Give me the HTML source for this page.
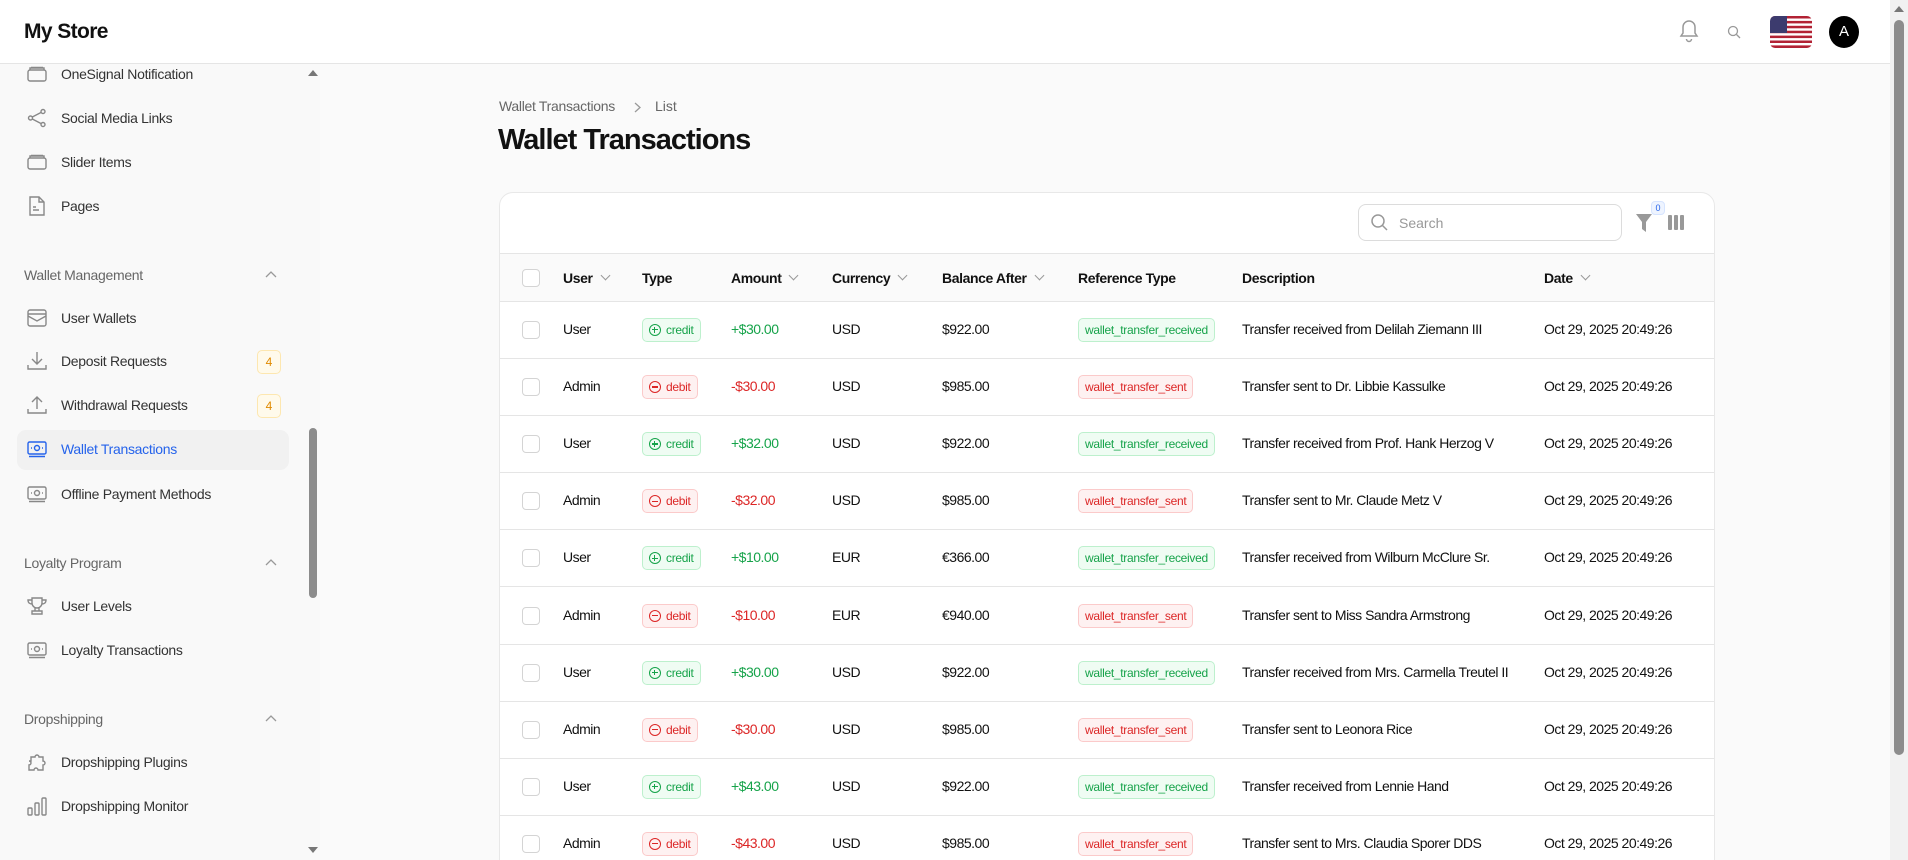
<!DOCTYPE html>
<html style="width:1908px;height:860px;overflow:hidden"><head><meta charset="utf-8">
<style>
*{box-sizing:border-box;margin:0;padding:0}
body{width:1908px;height:860px;overflow:hidden;font-family:"Liberation Sans",sans-serif;background:#fafafa;color:#111;position:relative}
.hdr{position:absolute;left:0;top:0;width:1890px;height:64px;background:#fff;border-bottom:1px solid #e5e5e5}
.logo{position:absolute;left:24px;top:20px;font-size:21px;font-weight:bold;letter-spacing:-0.6px}
.side{position:absolute;left:0;top:64px;width:305px;height:796px;background:#f9f9f9}
.sscroll{position:absolute;left:305px;top:64px;width:15px;height:796px;background:#f9f9f9}
.thumb{position:absolute;left:309px;top:428px;width:8px;height:170px;background:#8c8c8c;border-radius:4px}
.item{position:absolute;left:27px;height:20px;display:flex;align-items:center;font-size:14px;color:#333;letter-spacing:-0.3px}
.item svg{width:20px;height:20px;margin-right:14px;fill:none;stroke:#888;stroke-width:1.4}
.sec{position:absolute;left:24px;font-size:14px;color:#666;letter-spacing:-0.3px}
.chev{position:absolute;left:265px;width:12px;height:8px}
.cnt{position:absolute;left:257px;width:24px;height:24px;border:1px solid #fde7b0;background:#fffaeb;border-radius:5px;color:#e08a00;font-size:12px;text-align:center;line-height:22px}
.act{position:absolute;left:17px;top:430px;width:272px;height:40px;background:#f1f1f1;border-radius:9px}
.main-scroll{position:absolute;left:1890px;top:0;width:18px;height:860px;background:#f1f1f1}
.mthumb{position:absolute;left:1894px;top:20px;width:10px;height:735px;background:#8c8c8c;border-radius:5px}
.card{position:absolute;left:499px;top:192px;width:1216px;height:690px;background:#fff;border:1px solid #e8e8e8;border-radius:14px;overflow:hidden}
.thead{position:absolute;left:0;top:60px;width:100%;height:49px;background:#fafafa;border-top:1px solid #e5e5e5;border-bottom:1px solid #e5e5e5}
.th{position:absolute;top:16px;font-size:14px;font-weight:bold;letter-spacing:-0.4px}
.th .d{display:inline-block;width:7px;height:7px;border-right:1.3px solid #999;border-bottom:1.3px solid #999;transform:rotate(45deg);margin-left:9px;position:relative;top:-4px}
.row{position:absolute;left:0;width:100%;height:57px;border-bottom:1px solid #e5e5e5}
.c{position:absolute;top:19px;font-size:14px;letter-spacing:-0.5px;white-space:nowrap}
.cb{position:absolute;left:22px;width:18px;height:18px;border:1px solid #d4d4d4;border-radius:4px;background:#fff}
.bd{position:absolute;top:16px;height:24px;border-radius:5px;font-size:12px;line-height:22px;padding:0 6px;white-space:nowrap;letter-spacing:-0.3px}
.g{background:#effcf3;border:1px solid #bdf0cd;color:#16a34a}
.r{background:#fef1f1;border:1px solid #fbcaca;color:#dc2626}
.circ{display:inline-block;width:12px;height:12px;border:1.2px solid currentColor;border-radius:50%;vertical-align:-2px;margin-right:5px;position:relative}
.circ:after{content:"";position:absolute;left:2px;top:4.3px;width:5.5px;height:1.2px;background:currentColor}
.plus:before{content:"";position:absolute;left:4.3px;top:2px;width:1.2px;height:5.5px;background:currentColor}
</style></head><body>
<div class="hdr">
 <div class="logo">My Store</div>
 <svg style="position:absolute;left:1679px;top:19px" width="20" height="24" viewBox="0 0 20 24" fill="none" stroke="#999" stroke-width="1.5"><path d="M10 2a6 6 0 0 0-6 6v6l-2 3h16l-2-3V8a6 6 0 0 0-6-6z"/><path d="M7.5 20a2.5 2.5 0 0 0 5 0"/></svg>
 <svg style="position:absolute;left:1727px;top:25px" width="14" height="14" viewBox="0 0 14 14" fill="none" stroke="#999" stroke-width="1.3"><circle cx="6" cy="6" r="4.5"/><path d="M9.5 9.5L13 13"/></svg>
 <svg style="position:absolute;left:1770px;top:16px;border-radius:5px" width="42" height="32" viewBox="0 0 42 32"><rect width="42" height="32" fill="#fff"/><g fill="#b22234"><rect y="0" width="42" height="2.5"/><rect y="4.9" width="42" height="2.5"/><rect y="9.8" width="42" height="2.5"/><rect y="14.7" width="42" height="2.5"/><rect y="19.6" width="42" height="2.5"/><rect y="24.5" width="42" height="2.5"/><rect y="29.4" width="42" height="2.6"/></g><rect width="17" height="17" fill="#3c3b6e"/></svg>
 <div style="position:absolute;left:1829px;top:16px;width:30px;height:32px;border-radius:50%;background:#000;color:#fff;font-size:15px;text-align:center;line-height:32px">A</div>
</div>
<div class="side"></div>
<div class="sscroll"></div>
<svg style="position:absolute;left:308px;top:70px" width="10" height="6"><path d="M0 6L5 0L10 6z" fill="#777"/></svg>
<svg style="position:absolute;left:308px;top:847px" width="10" height="6"><path d="M0 0L5 6L10 0z" fill="#777"/></svg>
<div class="thumb"></div>
<div class="act"></div>
<div class="item" style="top:64px"><svg viewBox="0 0 20 20"><rect x="1" y="6" width="18" height="11" rx="2"/><path d="M3 6V4h14v2M4 3.5h12"/></svg>OneSignal Notification</div>
<div class="item" style="top:108px"><svg viewBox="0 0 20 20"><circle cx="16" cy="3.5" r="2"/><circle cx="3.5" cy="10" r="2"/><circle cx="16" cy="16.5" r="2"/><path d="M5.3 9l8.9-4.6M5.3 11l8.9 4.6"/></svg>Social Media Links</div>
<div class="item" style="top:152px"><svg viewBox="0 0 20 20"><rect x="1" y="6" width="18" height="11" rx="2"/><path d="M3 6V4h14v2M4 3.5h12"/></svg>Slider Items</div>
<div class="item" style="top:196px"><svg viewBox="0 0 20 20"><path d="M3 1h9l5 5v13H3z"/><path d="M12 1v5h5M6 14h6M6 11h3"/></svg>Pages</div>
<div class="sec" style="top:267px">Wallet Management</div>
<svg class="chev" style="top:270px" viewBox="0 0 12 8" fill="none" stroke="#999" stroke-width="1.3"><path d="M1 7l5-5 5 5"/></svg>
<div class="item" style="top:308px"><svg viewBox="0 0 20 20"><rect x="1" y="2" width="18" height="16" rx="2"/><path d="M1 6h18M1 8l9 5 9-5"/></svg>User Wallets</div>
<div class="item" style="top:351px"><svg viewBox="0 0 20 20"><path d="M10 1v12M5 8l5 5 5-5M1 14v4h18v-4"/></svg>Deposit Requests</div>
<div class="cnt" style="top:350px">4</div>
<div class="item" style="top:395px"><svg viewBox="0 0 20 20"><path d="M10 14V2M5 7l5-5 5 5M1 14v4h18v-4"/></svg>Withdrawal Requests</div>
<div class="cnt" style="top:394px">4</div>
<div class="item" style="top:439px;color:#2563eb"><svg viewBox="0 0 20 20" style="stroke:#2563eb"><rect x="1" y="3" width="18" height="12" rx="1.5"/><circle cx="10" cy="9" r="2.5"/><path d="M4 9h1M15 9h1M2 17.5h16"/></svg>Wallet Transactions</div>
<div class="item" style="top:484px"><svg viewBox="0 0 20 20"><rect x="1" y="3" width="18" height="12" rx="1.5"/><circle cx="10" cy="9" r="2.5"/><path d="M4 9h1M15 9h1M2 17.5h16"/></svg>Offline Payment Methods</div>
<div class="sec" style="top:555px">Loyalty Program</div>
<svg class="chev" style="top:558px" viewBox="0 0 12 8" fill="none" stroke="#999" stroke-width="1.3"><path d="M1 7l5-5 5 5"/></svg>
<div class="item" style="top:596px"><svg viewBox="0 0 20 20"><path d="M5 2h10v5a5 5 0 0 1-10 0zM5 4H1c0 3 2 4 4 4M15 4h4c0 3-2 4-4 4M8 12v3h4v-3M5 15h10v3H5z"/></svg>User Levels</div>
<div class="item" style="top:640px"><svg viewBox="0 0 20 20"><rect x="1" y="3" width="18" height="12" rx="1.5"/><circle cx="10" cy="9" r="2.5"/><path d="M4 9h1M15 9h1M2 17.5h16"/></svg>Loyalty Transactions</div>
<div class="sec" style="top:711px">Dropshipping</div>
<svg class="chev" style="top:714px" viewBox="0 0 12 8" fill="none" stroke="#999" stroke-width="1.3"><path d="M1 7l5-5 5 5"/></svg>
<div class="item" style="top:752px"><svg viewBox="0 0 20 20"><path d="M4 5h4a2 2 0 1 1 4 0h4v4a2 2 0 1 1 0 4v5h-5a2 2 0 1 0-4 0H2v-5a2 2 0 1 0 0-4h2z"/></svg>Dropshipping Plugins</div>
<div class="item" style="top:796px"><svg viewBox="0 0 20 20"><rect x="1" y="12" width="4" height="7" rx="1"/><rect x="8" y="7" width="4" height="12" rx="1"/><rect x="15" y="2" width="4" height="17" rx="1"/></svg>Dropshipping Monitor</div>

<div style="position:absolute;left:499px;top:98px;font-size:14px;color:#666;letter-spacing:-0.3px">Wallet Transactions</div>
<svg style="position:absolute;left:634px;top:102px" width="7" height="11" fill="none" stroke="#999" stroke-width="1.3"><path d="M1 1l5 4.5L1 10"/></svg>
<div style="position:absolute;left:655px;top:98px;font-size:14px;color:#666">List</div>
<div style="position:absolute;left:498px;top:124px;font-size:29px;font-weight:bold;letter-spacing:-1px">Wallet Transactions</div>
<div class="main-scroll"></div><div class="mthumb"></div>
<svg style="position:absolute;left:1894px;top:6px" width="10" height="6"><path d="M0 6L5 0L10 6z" fill="#777"/></svg>

<div class="card">
 <div style="position:absolute;left:858px;top:11px;width:264px;height:37px;border:1px solid #dcdcdc;border-radius:8px"></div>
 <svg style="position:absolute;left:871px;top:21px" width="17" height="17" fill="none" stroke="#999" stroke-width="1.5"><circle cx="7" cy="7" r="6"/><path d="M11.5 11.5L16 16"/></svg>
 <div style="position:absolute;left:899px;top:22px;font-size:14px;color:#999">Search</div>
 <svg style="position:absolute;left:1136px;top:21px" width="16" height="18"><path d="M0 0h16l-6 8v10l-4-3V8z" fill="#999"/></svg>
 <div style="position:absolute;left:1151px;top:8px;width:14px;height:14px;border-radius:4px;background:#eef4ff;border:1px solid #d6e4ff;color:#2563eb;font-size:9px;text-align:center;line-height:12px">0</div>
 <svg style="position:absolute;left:1168px;top:22px" width="16" height="15"><rect x="0" y="0" width="4" height="15" rx="1" fill="#999"/><rect x="6" y="0" width="4" height="15" rx="1" fill="#999"/><rect x="12" y="0" width="4" height="15" rx="1" fill="#999"/></svg>
 <div class="thead">
  <div class="cb" style="top:15px"></div>
  <div class="th" style="left:63px">User<span class="d"></span></div>
  <div class="th" style="left:142px">Type</div>
  <div class="th" style="left:231px">Amount<span class="d"></span></div>
  <div class="th" style="left:332px">Currency<span class="d"></span></div>
  <div class="th" style="left:442px">Balance After<span class="d"></span></div>
  <div class="th" style="left:578px">Reference Type</div>
  <div class="th" style="left:742px">Description</div>
  <div class="th" style="left:1044px">Date<span class="d"></span></div>
 </div>
 <div id="rows"></div>
</div>
<script>
var d=[["User",1,"+$30.00","USD","$922.00","Transfer received from Delilah Ziemann III"],
["Admin",0,"-$30.00","USD","$985.00","Transfer sent to Dr. Libbie Kassulke"],
["User",1,"+$32.00","USD","$922.00","Transfer received from Prof. Hank Herzog V"],
["Admin",0,"-$32.00","USD","$985.00","Transfer sent to Mr. Claude Metz V"],
["User",1,"+$10.00","EUR","€366.00","Transfer received from Wilburn McClure Sr."],
["Admin",0,"-$10.00","EUR","€940.00","Transfer sent to Miss Sandra Armstrong"],
["User",1,"+$30.00","USD","$922.00","Transfer received from Mrs. Carmella Treutel II"],
["Admin",0,"-$30.00","USD","$985.00","Transfer sent to Leonora Rice"],
["User",1,"+$43.00","USD","$922.00","Transfer received from Lennie Hand"],
["Admin",0,"-$43.00","USD","$985.00","Transfer sent to Mrs. Claudia Sporer DDS"]];
var h="";
d.forEach(function(r,i){var t=109+i*57.1,g=r[1];
h+='<div class="row" style="top:'+t+'px"><div class="cb" style="top:19px"></div>'+
'<div class="c" style="left:63px">'+r[0]+'</div>'+
'<div class="bd '+(g?'g':'r')+'" style="left:142px"><span class="circ'+(g?' plus':'')+'"></span>'+(g?'credit':'debit')+'</div>'+
'<div class="c" style="left:231px;color:'+(g?'#16a34a':'#dc2626')+'">'+r[2]+'</div>'+
'<div class="c" style="left:332px">'+r[3]+'</div>'+
'<div class="c" style="left:442px">'+r[4]+'</div>'+
'<div class="bd '+(g?'g':'r')+'" style="left:578px">'+(g?'wallet_transfer_received':'wallet_transfer_sent')+'</div>'+
'<div class="c" style="left:742px">'+r[5]+'</div>'+
'<div class="c" style="left:1044px">Oct 29, 2025 20:49:26</div></div>';});
document.getElementById("rows").innerHTML=h;
</script>
</body></html>
